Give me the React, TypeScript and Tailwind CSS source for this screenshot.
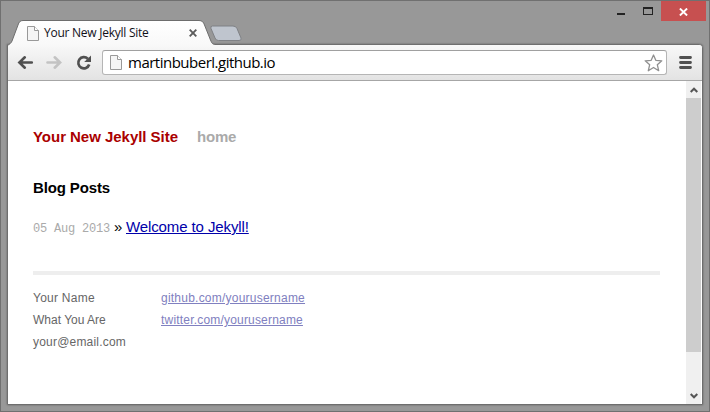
import React from 'react';

const PageIcon = () => (
  <svg width="12" height="15" viewBox="0 0 12 15" className="block shrink-0">
    <path d="M.5.5H7.5L11.500 4.500V14.500H.5Z" fill="#f5f5f5" stroke="#999" />
    <path d="M7.5.5V4.5H11.5" fill="#fff" stroke="#999" />
  </svg>
);

const TitleBar = () => (
  <div className="flex h-5 shrink-0 justify-end pr-[3px]">
    <svg width="80" height="20" className="block" shapeRendering="crispEdges">
      <rect x="36" y="12" width="8" height="2" fill="#222" />
      <path d="M62 6h10v8H62zM63 8v5h8V8z" fill="#222" fillRule="evenodd" />
    </svg>
    <div className="flex h-5 w-[45px] items-center justify-center bg-[#c75050]">
      <svg width="9" height="8" viewBox="0 0 9 8" className="mt-0.5 block">
        <path d="M.9.5 8.1 7.5M8.1.5.9 7.5" stroke="#fff" strokeWidth="1.9" />
      </svg>
    </div>
  </div>
);

const TabStrip = () => (
  <div className="relative z-10 flex h-[23px] shrink-0">
    <div className="grid w-[207px] shrink-0">
      <svg width="260" height="25" viewBox="0 0 260 25" className="col-start-1 row-start-1 block overflow-visible">
        <defs>
          <linearGradient id="tab" x1="0" y1="0" x2="0" y2="1">
            <stop offset="0" stopColor="#fff" />
            <stop offset="1" stopColor="#f8f8f8" />
          </linearGradient>
        </defs>
        <path
          d="M0 25.500V24C2 23 3 22.500 4 20L10 4C11 1 12 -.5 15 -.5H191C194 -.5 195.500 1 196.500 4L202.500 19C204 22.500 204.500 23.500 208 23.500V25.500Z"
          fill="url(#tab)"
        />
        <path
          d="M-.5 26V24.500C1.500 23 3 22.500 4 20L10 4C11 1 12 -.5 15 -.5H191C194 -.5 195.500 1 196.500 4L202.500 19C204 22.500 204.500 23.500 208 23.500"
          fill="none"
          stroke="#6d6d6d"
        />
        <path
          d="M204.500 5H225Q228 5 229 7.500L233 17Q234 19.500 231 19.500H210.500Q208 19.500 207 17L203 7.500Q202 5 204.500 5Z"
          fill="#bfc5ce"
          stroke="#7f8185"
        />
      </svg>
      <div className="col-start-1 row-start-1 flex h-6 items-center pl-[19px]">
        <PageIcon />
        <span className="ml-[5px] w-[120px] whitespace-nowrap font-['Open_Sans','Noto_Sans',sans-serif] text-[12px] leading-4 tracking-[-0.25px] text-[#101018]">
          Your New Jekyll Site
        </span>
        <svg width="8" height="8" viewBox="0 0 8 8" className="ml-[25px] block">
          <path d="M.7.7 7.3 7.3M7.3.7.7 7.3" stroke="#5c5c5c" strokeWidth="1.9" />
        </svg>
      </div>
    </div>
  </div>
);

const Toolbar = () => (
  <div className="flex h-9 shrink-0 items-center rounded-tr-[3px] border-b border-[#a6a6a6] bg-linear-to-b from-[#f8f8f8] to-[#e3e3e3] pl-[10px] pr-[10px]">
    <svg width="74" height="16" viewBox="0 0 74 16" className="block shrink-0 overflow-visible" fill="none">
      <g strokeWidth="2.6" strokeLinecap="round">
        <path d="M13.800 7.500H2M6.800 2.300 1.400 7.500 6.800 12.700" stroke="#505050" />
        <path d="M29.500 7.500H41.500M36.700 2.300 42.100 7.500 36.700 12.700" stroke="#c3c3c3" />
      </g>
      <path d="M69.800 3.700A5.600 5.600 0 1 0 71.200 9.500" stroke="#505050" strokeWidth="2.700" />
      <path d="M73 .5V7H66.200Z" fill="#505050" />
    </svg>
    <div className="ml-2.5 flex h-[25px] flex-1 items-center rounded-[3px] border border-[#b5b5b5] border-t-[#a0a0a0] bg-white pl-[7px] pr-[3px]">
      <PageIcon />
      <span className="ml-1.5 flex-1 whitespace-nowrap pb-0.5 font-['Open_Sans','Noto_Sans',sans-serif] text-[15px] leading-5 tracking-[-0.5px] text-black">
        martinbuberl.github.io
      </span>
      <svg width="19" height="18" viewBox="0 0 19 18" className="block">
        <path
          d="M9.500 1 11.800 6.300 17.800 6.800 13.300 10.700 14.700 16.700 9.500 13.500 4.300 16.700 5.700 10.700 1.200 6.800 7.200 6.300Z"
          fill="#fff"
          stroke="#909090"
          strokeWidth="1.300"
          strokeLinejoin="round"
        />
      </svg>
    </div>
    <svg width="13" height="13" viewBox="0 0 13 13" className="ml-3 block">
      <path d="M1.500 1.500H11.500M1.500 6.500H11.500M1.500 11.500H11.500" stroke="#505050" strokeWidth="2.800" strokeLinecap="round" />
    </svg>
  </div>
);

const Page = () => (
  <main className="w-[678px] shrink-0 pl-[25px] pr-[26px] pt-[45px] font-['Liberation_Sans',Arial,sans-serif] text-[15px] leading-[22px] text-black">
    <header className="flex gap-[19px] font-bold tracking-[-0.03px]">
      <span className="text-[#a00]">Your New Jekyll Site</span>
      <span className="tracking-[-0.2px] text-[#aaa]">home</span>
    </header>
    <h1 className="mt-[29px] font-bold tracking-[-0.13px]">Blog Posts</h1>
    <p className="mt-[17px] flex items-baseline whitespace-pre">
      <span className="w-[81px] font-['Liberation_Mono','Courier_New',monospace] text-[12px] tracking-[-0.2px] text-[#aaa]">05 Aug 2013</span>
      <span className="w-3">»</span>
      <a className="tracking-[-0.11px] text-[#00a] underline">Welcome to Jekyll!</a>
    </p>
    <footer className="mt-[31px] flex border-t-4 border-[#eee] pt-3 text-[12px] leading-[22px] text-[#666]">
      <div className="w-32">
        <p className="tracking-[0.25px]">Your Name</p>
        <p>What You Are</p>
        <p className="tracking-[0.2px]">your@email.com</p>
      </div>
      <div className="text-[#8080c0]">
        <p className="tracking-[0.23px] underline">github.com/yourusername</p>
        <p className="tracking-[0.19px] underline">twitter.com/yourusername</p>
      </div>
    </footer>
  </main>
);

const ScrollBar = () => (
  <div className="flex w-[15px] shrink-0 flex-col bg-[#f0f0f0]">
    <div className="flex h-[17px] items-center justify-center">
      <svg width="8" height="6" viewBox="0 0 8 6"><path d="M.7 5 4 1.700 7.300 5" fill="none" stroke="#555" strokeWidth="2" /></svg>
    </div>
    <div className="h-[254px] bg-[#cdcdcd]" />
    <div className="mt-auto flex h-[17px] items-center justify-center">
      <svg width="8" height="6" viewBox="0 0 8 6"><path d="M.7 1 4 4.300 7.300 1" fill="none" stroke="#555" strokeWidth="2" /></svg>
    </div>
  </div>
);

export default function App() {
  return (
    <div className="flex h-[412px] w-[710px] flex-col overflow-hidden border border-[#707070] bg-[#989898]">
      <TitleBar />
      <div className="ml-[7px] mr-1.5 flex flex-col">
        <TabStrip />
        <div className="-ml-px flex h-[361px] flex-col rounded-tr-[4px] border border-[#6e6e6e] bg-white shadow-[0_0_2px_rgba(0,0,0,0.4)]">
          <Toolbar />
          <div className="flex flex-1">
            <Page />
            <ScrollBar />
          </div>
        </div>
      </div>
    </div>
  );
}
